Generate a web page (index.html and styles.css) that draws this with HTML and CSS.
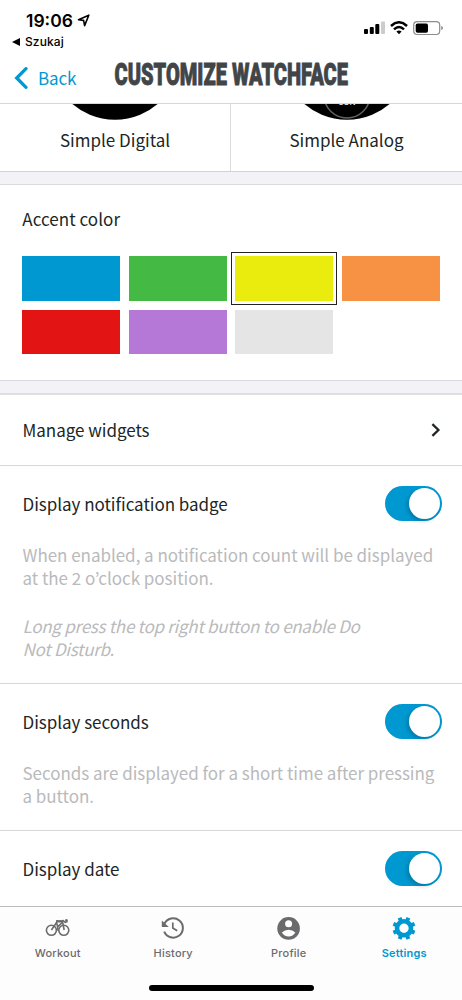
FILE: index.html
```html
<!DOCTYPE html>
<html lang="en">
<head>
<meta charset="utf-8">
<title>Customize watchface</title>
<link rel="stylesheet" href="styles.css">
</head>
<body>
<div class="screen">
  <header class="top">
    <div class="status">
      <div class="clock"><span class="time">19:06</span><svg width="13" height="13" viewBox="0 0 13 13"><path d="M1.5 5.8 11.8 1.2 7.6 11.6 6.6 6.4Z" fill="none" stroke="#000" stroke-width="1.6" stroke-linejoin="round"/></svg></div>
      <svg class="signals" width="80" height="15" viewBox="0 0 80 15">
        <rect x="0" y="8" width="4" height="5" rx="1"/><rect x="5.8" y="6" width="4" height="7" rx="1"/><rect x="11.3" y="3" width="4" height="10" rx="1"/><rect x="17" y="0.5" width="4" height="12.5" rx="1" fill="#ccc"/>
        <g fill="none" stroke="#000" stroke-width="2.5"><path d="M27 5Q35-2.4 43 5"/><path d="M30 8.3Q35 3.7 40 8.3"/></g><path d="M32.4 10.6Q35 8.4 37.6 10.6L35 13.2Z"/>
        <rect x="49.7" y=".7" width="26" height="12.8" rx="3.4" fill="#fff" stroke="#8d8d8d" stroke-width="1.2"/><rect x="51.7" y="2.4" width="12.3" height="9.3" rx="1.8"/><path d="M77.2 5Q79 5.6 79 7T77.2 9Z" fill="#888"/>
      </svg>
    </div>
    <div class="return"><svg width="8" height="8" viewBox="0 0 8 8"><path d="M0 4 8 0V8Z"/></svg><span>Szukaj</span></div>
    <div class="nav">
      <svg class="back-icon" width="14" height="22" viewBox="0 0 14 22"><path d="M12 1.7 2.7 11 12 20.3" fill="none" stroke="#0098d1" stroke-width="3.3" stroke-linecap="round"/></svg>
      <span class="back">Back</span>
      <svg class="title" width="236" height="26" viewBox="0 0 236 26"><text x="0.5" y="23.9" textLength="233.5" lengthAdjust="spacingAndGlyphs">CUSTOMIZE WATCHFACE</text></svg>
    </div>
  </header>
  <main>
    <section class="faces">
      <div class="face"><svg width="100" height="17" viewBox="0 0 100 17"><circle cx="50" cy="-50" r="65.7"/></svg><span>Simple Digital</span></div>
      <div class="face"><svg width="100" height="17" viewBox="0 0 100 17"><circle cx="50" cy="-50" r="65.7"/><circle cx="50" cy="-9" r="23" fill="none" stroke="#626262" stroke-width="1.5"/><text class="day" x="50" y="1" text-anchor="middle">SUN</text></svg><span>Simple Analog</span></div>
    </section>
    <section class="accent">
      <h2>Accent color</h2>
      <div class="swatches">
        <i class="blue"></i><i class="green"></i><i class="yellow"></i><i class="orange"></i><i class="red"></i><i class="purple"></i><i class="gray"></i>
      </div>
    </section>
    <section class="row manage"><span>Manage widgets</span><svg width="10" height="14" viewBox="0 0 10 14"><path d="M1.4 1.2 7.4 7 1.4 12.8" fill="none" stroke="#202626" stroke-width="2.3"/></svg></section>
    <section class="setting badge">
      <div class="row"><span>Display notification badge</span><b class="toggle"></b></div>
      <p>When enabled, a notification count will be displayed<br>at the 2 o’clock position.</p>
      <p class="note">Long press the top right button to enable Do<br>Not Disturb.</p>
    </section>
    <section class="setting seconds">
      <div class="row"><span>Display seconds</span><b class="toggle"></b></div>
      <p>Seconds are displayed for a short time after pressing<br>a button.</p>
    </section>
    <section class="setting date"><div class="row"><span>Display date</span><b class="toggle"></b></div></section>
  </main>
  <footer>
    <nav class="tabs">
      <div class="tab"><svg width="26" height="24" viewBox="0 0 26 24" fill="none" stroke="currentColor" stroke-width="1.6"><circle cx="6.4" cy="14.3" r="5"/><circle cx="18.8" cy="14.3" r="5"/><path d="M6.4 14 11.6 6.5 12.6 10.8 13 14.6M12.6 10.8 17.6 6.2 19.2 14"/><path d="M11 5.3H18" stroke-width="2.4"/><path d="M17.5 4.2 20.2 6.3 22.6 5.6"/><circle cx="21.4" cy="4.2" r="1.3" fill="currentColor" stroke="none"/></svg><span>Workout</span></div>
      <div class="tab"><svg width="26" height="24" viewBox="0 0 26 24" fill="none" stroke="currentColor" stroke-width="2"><path d="M4.4 7.8A9.7 9.7 0 1 1 4.2 15.6"/><path d="M12.8 6.6v5.4l4.4 2.8" stroke-width="1.7"/><path d="M1.8 4.6 8.8 11H1.8Z" fill="currentColor" stroke="none"/></svg><span>History</span></div>
      <div class="tab"><svg width="26" height="24" viewBox="0 0 26 24"><circle cx="12.6" cy="12.4" r="11.3" fill="currentColor"/><circle cx="12.6" cy="7.8" r="3.5" fill="#fff"/><path d="M5.9 16.5Q8.6 13.8 12.6 13.8T19.3 16.5Q16.9 20.5 12.6 20.5T5.9 16.5Z" fill="#fff"/></svg><span>Profile</span></div>
      <div class="tab active"><svg width="26" height="24" viewBox="-13 -12.3 26 24" fill="none" stroke="currentColor"><circle r="7" stroke-width="4.6"/><path stroke-width="4" d="M7.4 3.1 10.6 4.4M7.4-3.1 10.6-4.4M-7.4 3.1-10.6 4.4M-7.4-3.1-10.6-4.4M3.1 7.4 4.4 10.6M3.1-7.4 4.4-10.6M-3.1 7.4-4.4 10.6M-3.1-7.4-4.4-10.6"/></svg><span>Settings</span></div>
    </nav>
    <div class="home"></div>
  </footer>
</div>
</body>
</html>
```

FILE: styles.css
```css
* { box-sizing: border-box; }
body { margin: 0; background: #fff; }
svg { display: block; flex: none; }
.screen { width: 462px; height: 1000px; display: flex; flex-direction: column; overflow: hidden; color: #202626; font: 17px/24px "Noto Sans CJK JP", "Noto Sans", sans-serif; }
.top { height: 104px; flex: none; border-bottom: 1.5px solid #d8d8da; font-family: Inter, sans-serif; color: #000; }
.status { height: 34px; padding: 9px 18.3px 0 26px; display: flex; justify-content: space-between; }
.clock { display: flex; gap: 4px; font-size: 17.5px; line-height: 23px; font-weight: 600; }
.clock svg { margin-top: 5px; }
.signals { margin: 12px 0 0; }
.return { height: 16px; padding-left: 12px; display: flex; align-items: center; gap: 5px; font-size: 12px; font-weight: 500; letter-spacing: .1px; }
.nav { display: flex; padding-left: 14px; }
.back-icon { margin-top: 17px; }
.back { margin: 16px 0 0 10px; width: 76px; color: #0098d1; font: 17px/24px "Noto Sans CJK JP", sans-serif; letter-spacing: -.15px; }
.title { margin-top: 11px; overflow: visible; fill: #414548; stroke: #414548; stroke-width: .9; font: 900 30.8px Roboto, sans-serif; }
main { height: 802px; flex: none; overflow: hidden; }
.faces { height: 68px; display: flex; border-bottom: 1px solid #d2d2d5; }
.face { width: 231px; display: flex; flex-direction: column; align-items: center; }
.face:first-child { border-right: 1px solid #dcdcdc; }
.face span { margin-top: 7px; }
.day { font: 600 8px Inter, sans-serif; fill: #ddd; }
.accent { height: 221px; padding: 23px 22.3px 0; border-top: 12px solid #f2f2f7; border-bottom: 12px solid #f2f2f7; position: relative; }
.accent::before, .accent::after { content: ""; position: absolute; left: 0; right: 0; height: 1px; background: #dadade; }
.accent::before { top: 0; }
.accent::after { bottom: 0; }
h2 { margin: 0; font: inherit; letter-spacing: .05px; }
.swatches { margin-top: 25.4px; display: grid; grid-template-columns: repeat(4, 97.7px); column-gap: 8.9px; row-gap: 9px; }
.swatches i { height: 44.5px; }
.blue { background: #0098d1; }
.green { background: #44ba44; }
.yellow { background: #eaec0d; outline: 1px solid #222; outline-offset: 3px; }
.orange { background: #f79244; }
.red { background: #e31414; }
.purple { background: #b678d6; }
.gray { background: #e5e5e5; }
.row { display: flex; align-items: center; justify-content: space-between; letter-spacing: -.03px; }
.manage { height: 73px; padding: 0 21px 1px 22.5px; border-top: 2px solid #dfdfe3; border-bottom: 1px solid #d8d8da; }
.setting { padding: 20px 20px 0 22.5px; border-bottom: 1px solid #d8d8da; }
.badge { height: 218px; }
.seconds { height: 147px; }
.date { height: 80px; border: 0; }
.toggle { width: 57px; height: 35px; padding: 2px; border-radius: 18px; background: #0098d1; display: flex; justify-content: flex-end; }
.toggle::before { content: ""; width: 31px; height: 31px; border-radius: 50%; background: #fff; box-shadow: -2px 2px 4px #0003; }
p { margin: 22px 0 0; color: #b9babb; line-height: 23px; white-space: nowrap; letter-spacing: -.03px; }
p.note { margin-top: 25px; font-style: italic; letter-spacing: -.27px; }
footer { height: 94px; flex: none; background: #fdfdfd; border-top: 1px solid #bbb; }
.tabs { height: 78px; display: grid; grid-template-columns: repeat(4, 1fr); }
.tab { display: flex; flex-direction: column; align-items: center; padding-top: 9px; color: #6b6b6d; font: 500 11px/14px Inter, sans-serif; letter-spacing: .2px; }
.tab span { margin-top: 6px; }
.active { color: #0098d1; font-weight: 600; }
.home { width: 165px; height: 6px; margin: 0 auto; border-radius: 3px; background: #000; }
```
